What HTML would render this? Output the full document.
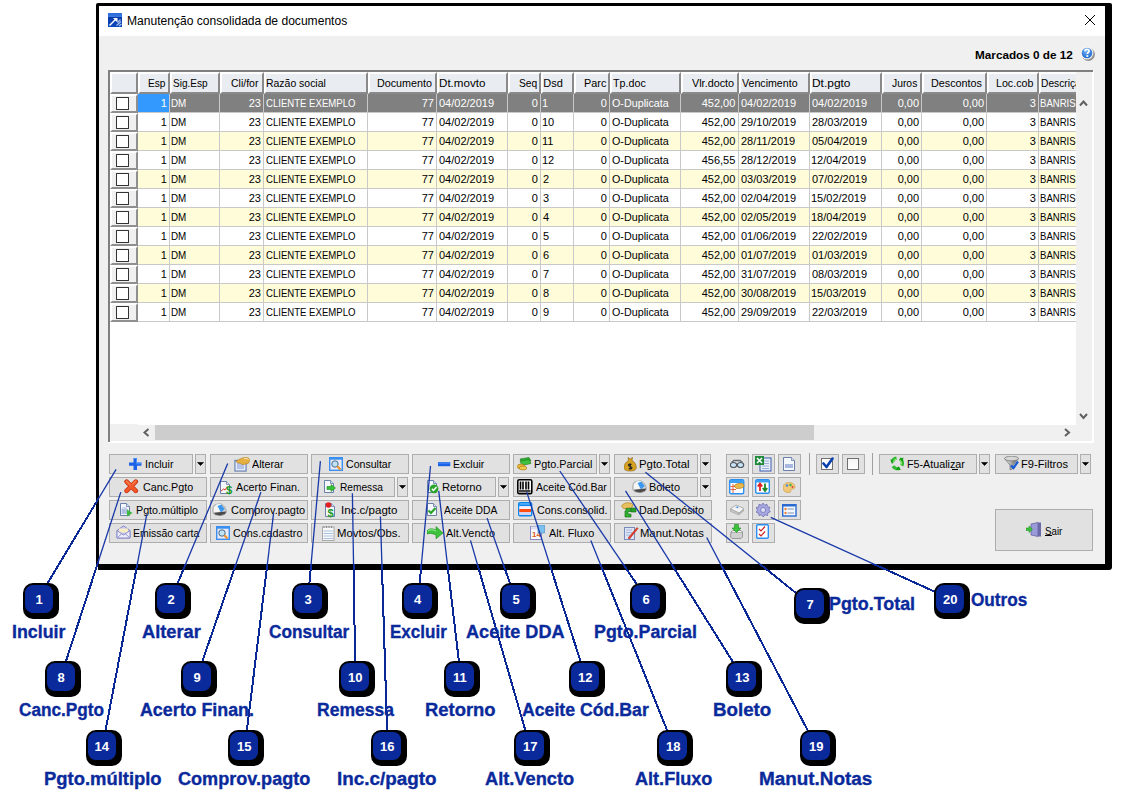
<!DOCTYPE html><html><head><meta charset="utf-8"><style>
html,body{margin:0;padding:0;}
body{width:1129px;height:807px;position:relative;overflow:hidden;background:#fff;font-family:'Liberation Sans',sans-serif;}
div,span,svg{position:absolute;}
.t{white-space:pre;line-height:normal;transform-origin:0 0;}
</style></head><body>
<div style="left:96px;top:3px;width:1016px;height:567px;background:#000;border-radius:2px 2px 3px 3px;"></div>
<div style="left:99px;top:6px;width:1006px;height:30px;background:#fff;"></div>
<div style="left:99px;top:36px;width:1006px;height:528px;background:#f0f0f0;"></div>
<div style="left:96px;top:564px;width:2px;height:6px;background:#fff;"></div>
<span class="t" style="left:127.49px;top:14px;font:12px 'Liberation Sans';color:#000;transform:scaleX(1.0064);">Manutenção consolidada de documentos</span>
<svg style="left:1083px;top:13px" width="14" height="14" viewBox="0 0 14 14"><path d="M2 2L12 12M12 2L2 12" stroke="#000" stroke-width="1"/></svg>
<span class="t" style="left:974.60px;top:49px;font:bold 11px 'Liberation Sans';color:#000;transform:scaleX(1.0674);">Marcados 0 de 12</span>
<svg style="left:1080px;top:46px" width="16" height="16" viewBox="0 0 16 16"><defs><radialGradient id="hg" cx="0.45" cy="0.3" r="0.7"><stop offset="0" stop-color="#7ab8f4"/><stop offset="1" stop-color="#1a66d0"/></radialGradient></defs><circle cx="8.3" cy="8.3" r="6.6" fill="#707070" opacity="0.75"/><circle cx="7" cy="7" r="6.4" fill="#f8f4f0"/><circle cx="7" cy="7" r="5.3" fill="url(#hg)"/><path d="M4.9 5.2C4.9 3.9 5.9 3.3 7 3.3C8.2 3.3 9.1 3.9 9.1 5C9.1 6.3 7.3 6.4 7.3 8" stroke="#fff" stroke-width="1.7" fill="none"/><rect x="6.3" y="9.2" width="2" height="1.7" fill="#fff"/></svg>
<svg style="left:108px;top:13px" width="15" height="15" viewBox="0 0 15 15"><defs><linearGradient id="tg" x1="0" y1="0" x2="0" y2="1"><stop offset="0" stop-color="#2a6ad8"/><stop offset="0.3" stop-color="#3a7ae0"/><stop offset="0.32" stop-color="#0a3aa8"/><stop offset="1" stop-color="#0a48c0"/></linearGradient></defs><rect x="0" y="0" width="14" height="14" fill="url(#tg)"/><path d="M1.5 12.5L7.5 6.5" stroke="#fff" stroke-width="1.5"/><path d="M5 5H9.5V9.5Z" fill="#fff"/><path d="M9.5 9.5L12.5 6.5M8.5 12.5L13 8.5M11 13L13.5 11" stroke="#a8c0ec" stroke-width="1.2"/></svg>
<div style="left:108px;top:70px;width:986px;height:373px;background:#fff;"></div>
<div style="left:108px;top:70px;width:985px;height:2px;background:#7f7f7f;"></div>
<div style="left:108px;top:70px;width:2px;height:372px;background:#7f7f7f;"></div>
<div style="left:110px;top:72px;width:28px;height:22px;background:#e9ecf0;box-sizing:border-box;border-left:2px solid #fff;border-top:2px solid #fff;border-right:2px solid #8a8a8a;border-bottom:2px solid #8a8a8a;"></div>
<div style="left:138px;top:72px;width:32px;height:22px;background:#e9ecf0;box-sizing:border-box;border-left:2px solid #fff;border-top:2px solid #fff;border-right:2px solid #8a8a8a;border-bottom:2px solid #8a8a8a;"></div>
<div style="left:170px;top:72px;width:50px;height:22px;background:#e9ecf0;box-sizing:border-box;border-left:2px solid #fff;border-top:2px solid #fff;border-right:2px solid #8a8a8a;border-bottom:2px solid #8a8a8a;"></div>
<div style="left:220px;top:72px;width:44px;height:22px;background:#e9ecf0;box-sizing:border-box;border-left:2px solid #fff;border-top:2px solid #fff;border-right:2px solid #8a8a8a;border-bottom:2px solid #8a8a8a;"></div>
<div style="left:264px;top:72px;width:104px;height:22px;background:#e9ecf0;box-sizing:border-box;border-left:2px solid #fff;border-top:2px solid #fff;border-right:2px solid #8a8a8a;border-bottom:2px solid #8a8a8a;"></div>
<div style="left:368px;top:72px;width:69px;height:22px;background:#e9ecf0;box-sizing:border-box;border-left:2px solid #fff;border-top:2px solid #fff;border-right:2px solid #8a8a8a;border-bottom:2px solid #8a8a8a;"></div>
<div style="left:437px;top:72px;width:71px;height:22px;background:#e9ecf0;box-sizing:border-box;border-left:2px solid #fff;border-top:2px solid #fff;border-right:2px solid #8a8a8a;border-bottom:2px solid #8a8a8a;"></div>
<div style="left:508px;top:72px;width:33px;height:22px;background:#e9ecf0;box-sizing:border-box;border-left:2px solid #fff;border-top:2px solid #fff;border-right:2px solid #8a8a8a;border-bottom:2px solid #8a8a8a;"></div>
<div style="left:541px;top:72px;width:33px;height:22px;background:#e9ecf0;box-sizing:border-box;border-left:2px solid #fff;border-top:2px solid #fff;border-right:2px solid #8a8a8a;border-bottom:2px solid #8a8a8a;"></div>
<div style="left:574px;top:72px;width:36px;height:22px;background:#e9ecf0;box-sizing:border-box;border-left:2px solid #fff;border-top:2px solid #fff;border-right:2px solid #8a8a8a;border-bottom:2px solid #8a8a8a;"></div>
<div style="left:610px;top:72px;width:71px;height:22px;background:#e9ecf0;box-sizing:border-box;border-left:2px solid #fff;border-top:2px solid #fff;border-right:2px solid #8a8a8a;border-bottom:2px solid #8a8a8a;"></div>
<div style="left:681px;top:72px;width:58px;height:22px;background:#e9ecf0;box-sizing:border-box;border-left:2px solid #fff;border-top:2px solid #fff;border-right:2px solid #8a8a8a;border-bottom:2px solid #8a8a8a;"></div>
<div style="left:739px;top:72px;width:71px;height:22px;background:#e9ecf0;box-sizing:border-box;border-left:2px solid #fff;border-top:2px solid #fff;border-right:2px solid #8a8a8a;border-bottom:2px solid #8a8a8a;"></div>
<div style="left:810px;top:72px;width:72px;height:22px;background:#e9ecf0;box-sizing:border-box;border-left:2px solid #fff;border-top:2px solid #fff;border-right:2px solid #8a8a8a;border-bottom:2px solid #8a8a8a;"></div>
<div style="left:882px;top:72px;width:40px;height:22px;background:#e9ecf0;box-sizing:border-box;border-left:2px solid #fff;border-top:2px solid #fff;border-right:2px solid #8a8a8a;border-bottom:2px solid #8a8a8a;"></div>
<div style="left:922px;top:72px;width:65px;height:22px;background:#e9ecf0;box-sizing:border-box;border-left:2px solid #fff;border-top:2px solid #fff;border-right:2px solid #8a8a8a;border-bottom:2px solid #8a8a8a;"></div>
<div style="left:987px;top:72px;width:52px;height:22px;background:#e9ecf0;box-sizing:border-box;border-left:2px solid #fff;border-top:2px solid #fff;border-right:2px solid #8a8a8a;border-bottom:2px solid #8a8a8a;"></div>
<div style="left:1039px;top:72px;width:37px;height:22px;background:#e9ecf0;box-sizing:border-box;border-left:2px solid #fff;border-top:2px solid #fff;border-bottom:2px solid #8a8a8a;"></div>
<div style="left:138px;top:94px;width:938px;height:19px;background:#808080;"></div>
<div style="left:110px;top:94px;width:28px;height:19px;background:#f0f0f0;box-sizing:border-box;border-left:2px solid #fff;border-top:2px solid #fff;border-right:2px solid #8f8f8f;border-bottom:2px solid #8f8f8f;"></div>
<div style="left:116px;top:97px;width:13px;height:13px;background:#fff;box-sizing:border-box;border:1px solid #333;border-radius:0.5px;"></div>
<div style="left:138px;top:94px;width:31px;height:18px;background:#3399ff;"></div>
<div style="left:138px;top:112px;width:938px;height:1px;background:#c9c9c9;"></div>
<div style="left:138px;top:113px;width:938px;height:19px;background:#ffffff;"></div>
<div style="left:110px;top:113px;width:28px;height:19px;background:#f0f0f0;box-sizing:border-box;border-left:2px solid #fff;border-top:2px solid #fff;border-right:2px solid #8f8f8f;border-bottom:2px solid #8f8f8f;"></div>
<div style="left:116px;top:116px;width:13px;height:13px;background:#fff;box-sizing:border-box;border:1px solid #333;border-radius:0.5px;"></div>
<div style="left:138px;top:131px;width:938px;height:1px;background:#c9c9c9;"></div>
<div style="left:138px;top:132px;width:938px;height:19px;background:#fffcd9;"></div>
<div style="left:110px;top:132px;width:28px;height:19px;background:#f0f0f0;box-sizing:border-box;border-left:2px solid #fff;border-top:2px solid #fff;border-right:2px solid #8f8f8f;border-bottom:2px solid #8f8f8f;"></div>
<div style="left:116px;top:135px;width:13px;height:13px;background:#fff;box-sizing:border-box;border:1px solid #333;border-radius:0.5px;"></div>
<div style="left:138px;top:150px;width:938px;height:1px;background:#c9c9c9;"></div>
<div style="left:138px;top:151px;width:938px;height:19px;background:#ffffff;"></div>
<div style="left:110px;top:151px;width:28px;height:19px;background:#f0f0f0;box-sizing:border-box;border-left:2px solid #fff;border-top:2px solid #fff;border-right:2px solid #8f8f8f;border-bottom:2px solid #8f8f8f;"></div>
<div style="left:116px;top:154px;width:13px;height:13px;background:#fff;box-sizing:border-box;border:1px solid #333;border-radius:0.5px;"></div>
<div style="left:138px;top:169px;width:938px;height:1px;background:#c9c9c9;"></div>
<div style="left:138px;top:170px;width:938px;height:19px;background:#fffcd9;"></div>
<div style="left:110px;top:170px;width:28px;height:19px;background:#f0f0f0;box-sizing:border-box;border-left:2px solid #fff;border-top:2px solid #fff;border-right:2px solid #8f8f8f;border-bottom:2px solid #8f8f8f;"></div>
<div style="left:116px;top:173px;width:13px;height:13px;background:#fff;box-sizing:border-box;border:1px solid #333;border-radius:0.5px;"></div>
<div style="left:138px;top:188px;width:938px;height:1px;background:#c9c9c9;"></div>
<div style="left:138px;top:189px;width:938px;height:19px;background:#ffffff;"></div>
<div style="left:110px;top:189px;width:28px;height:19px;background:#f0f0f0;box-sizing:border-box;border-left:2px solid #fff;border-top:2px solid #fff;border-right:2px solid #8f8f8f;border-bottom:2px solid #8f8f8f;"></div>
<div style="left:116px;top:192px;width:13px;height:13px;background:#fff;box-sizing:border-box;border:1px solid #333;border-radius:0.5px;"></div>
<div style="left:138px;top:207px;width:938px;height:1px;background:#c9c9c9;"></div>
<div style="left:138px;top:208px;width:938px;height:19px;background:#fffcd9;"></div>
<div style="left:110px;top:208px;width:28px;height:19px;background:#f0f0f0;box-sizing:border-box;border-left:2px solid #fff;border-top:2px solid #fff;border-right:2px solid #8f8f8f;border-bottom:2px solid #8f8f8f;"></div>
<div style="left:116px;top:211px;width:13px;height:13px;background:#fff;box-sizing:border-box;border:1px solid #333;border-radius:0.5px;"></div>
<div style="left:138px;top:226px;width:938px;height:1px;background:#c9c9c9;"></div>
<div style="left:138px;top:227px;width:938px;height:19px;background:#ffffff;"></div>
<div style="left:110px;top:227px;width:28px;height:19px;background:#f0f0f0;box-sizing:border-box;border-left:2px solid #fff;border-top:2px solid #fff;border-right:2px solid #8f8f8f;border-bottom:2px solid #8f8f8f;"></div>
<div style="left:116px;top:230px;width:13px;height:13px;background:#fff;box-sizing:border-box;border:1px solid #333;border-radius:0.5px;"></div>
<div style="left:138px;top:245px;width:938px;height:1px;background:#c9c9c9;"></div>
<div style="left:138px;top:246px;width:938px;height:19px;background:#fffcd9;"></div>
<div style="left:110px;top:246px;width:28px;height:19px;background:#f0f0f0;box-sizing:border-box;border-left:2px solid #fff;border-top:2px solid #fff;border-right:2px solid #8f8f8f;border-bottom:2px solid #8f8f8f;"></div>
<div style="left:116px;top:249px;width:13px;height:13px;background:#fff;box-sizing:border-box;border:1px solid #333;border-radius:0.5px;"></div>
<div style="left:138px;top:264px;width:938px;height:1px;background:#c9c9c9;"></div>
<div style="left:138px;top:265px;width:938px;height:19px;background:#ffffff;"></div>
<div style="left:110px;top:265px;width:28px;height:19px;background:#f0f0f0;box-sizing:border-box;border-left:2px solid #fff;border-top:2px solid #fff;border-right:2px solid #8f8f8f;border-bottom:2px solid #8f8f8f;"></div>
<div style="left:116px;top:268px;width:13px;height:13px;background:#fff;box-sizing:border-box;border:1px solid #333;border-radius:0.5px;"></div>
<div style="left:138px;top:283px;width:938px;height:1px;background:#c9c9c9;"></div>
<div style="left:138px;top:284px;width:938px;height:19px;background:#fffcd9;"></div>
<div style="left:110px;top:284px;width:28px;height:19px;background:#f0f0f0;box-sizing:border-box;border-left:2px solid #fff;border-top:2px solid #fff;border-right:2px solid #8f8f8f;border-bottom:2px solid #8f8f8f;"></div>
<div style="left:116px;top:287px;width:13px;height:13px;background:#fff;box-sizing:border-box;border:1px solid #333;border-radius:0.5px;"></div>
<div style="left:138px;top:302px;width:938px;height:1px;background:#c9c9c9;"></div>
<div style="left:138px;top:303px;width:938px;height:19px;background:#ffffff;"></div>
<div style="left:110px;top:303px;width:28px;height:19px;background:#f0f0f0;box-sizing:border-box;border-left:2px solid #fff;border-top:2px solid #fff;border-right:2px solid #8f8f8f;border-bottom:2px solid #8f8f8f;"></div>
<div style="left:116px;top:306px;width:13px;height:13px;background:#fff;box-sizing:border-box;border:1px solid #333;border-radius:0.5px;"></div>
<div style="left:138px;top:321px;width:938px;height:1px;background:#c9c9c9;"></div>
<div style="left:169px;top:94px;width:1px;height:228px;background:#c9c9c9;"></div>
<div style="left:219px;top:94px;width:1px;height:228px;background:#c9c9c9;"></div>
<div style="left:263px;top:94px;width:1px;height:228px;background:#c9c9c9;"></div>
<div style="left:367px;top:94px;width:1px;height:228px;background:#c9c9c9;"></div>
<div style="left:436px;top:94px;width:1px;height:228px;background:#c9c9c9;"></div>
<div style="left:507px;top:94px;width:1px;height:228px;background:#c9c9c9;"></div>
<div style="left:540px;top:94px;width:1px;height:228px;background:#c9c9c9;"></div>
<div style="left:573px;top:94px;width:1px;height:228px;background:#c9c9c9;"></div>
<div style="left:609px;top:94px;width:1px;height:228px;background:#c9c9c9;"></div>
<div style="left:680px;top:94px;width:1px;height:228px;background:#c9c9c9;"></div>
<div style="left:738px;top:94px;width:1px;height:228px;background:#c9c9c9;"></div>
<div style="left:809px;top:94px;width:1px;height:228px;background:#c9c9c9;"></div>
<div style="left:881px;top:94px;width:1px;height:228px;background:#c9c9c9;"></div>
<div style="left:921px;top:94px;width:1px;height:228px;background:#c9c9c9;"></div>
<div style="left:986px;top:94px;width:1px;height:228px;background:#c9c9c9;"></div>
<div style="left:1038px;top:94px;width:1px;height:228px;background:#c9c9c9;"></div>
<div style="left:110px;top:424px;width:28px;height:17px;background:#f0f0f0;"></div>
<div style="left:137px;top:425px;width:955px;height:16px;background:#f0f0f0;"></div>
<div style="left:155px;top:425px;width:659px;height:15px;background:#cdcdcd;"></div>
<svg style="left:142px;top:428px" width="9" height="9" viewBox="0 0 9 9"><path d="M6.5 1L2.5 4.5L6.5 8" fill="none" stroke="#606060" stroke-width="2"/></svg>
<svg style="left:1063px;top:428px" width="9" height="9" viewBox="0 0 9 9"><path d="M2 1L6 4.5L2 8" fill="none" stroke="#606060" stroke-width="2"/></svg>
<span class="t" style="left:147.68px;top:77px;font:11px 'Liberation Sans';color:#000;transform:scaleX(0.9222);">Esp</span>
<span class="t" style="left:173.40px;top:77px;font:11px 'Liberation Sans';color:#000;transform:scaleX(0.9158);">Sig.Esp</span>
<span class="t" style="left:230.80px;top:77px;font:11px 'Liberation Sans';color:#000;transform:scaleX(0.9552);">Cli/for</span>
<span class="t" style="left:266.45px;top:77px;font:11px 'Liberation Sans';color:#000;transform:scaleX(0.9500);">Razão social</span>
<span class="t" style="left:377.42px;top:77px;font:11px 'Liberation Sans';color:#000;transform:scaleX(0.9764);">Documento</span>
<span class="t" style="left:439.04px;top:77px;font:11px 'Liberation Sans';color:#000;transform:scaleX(1.0558);">Dt.movto</span>
<span class="t" style="left:518.50px;top:77px;font:11px 'Liberation Sans';color:#000;transform:scaleX(0.9316);">Seq</span>
<span class="t" style="left:543.20px;top:77px;font:11px 'Liberation Sans';color:#000;">Dsd</span>
<span class="t" style="left:583.51px;top:77px;font:11px 'Liberation Sans';color:#000;transform:scaleX(0.9905);">Parc</span>
<span class="t" style="left:613.40px;top:77px;font:11px 'Liberation Sans';color:#000;transform:scaleX(0.9735);">Tp.doc</span>
<span class="t" style="left:691.70px;top:77px;font:11px 'Liberation Sans';color:#000;transform:scaleX(0.9837);">Vlr.docto</span>
<span class="t" style="left:742.30px;top:77px;font:11px 'Liberation Sans';color:#000;transform:scaleX(0.9667);">Vencimento</span>
<span class="t" style="left:811.91px;top:77px;font:11px 'Liberation Sans';color:#000;transform:scaleX(1.0853);">Dt.pgto</span>
<span class="t" style="left:891.80px;top:77px;font:11px 'Liberation Sans';color:#000;transform:scaleX(0.9407);">Juros</span>
<span class="t" style="left:931.12px;top:77px;font:11px 'Liberation Sans';color:#000;transform:scaleX(0.9804);">Descontos</span>
<span class="t" style="left:996.33px;top:77px;font:11px 'Liberation Sans';color:#000;transform:scaleX(0.9684);">Loc.cob</span>
<span class="t" style="left:1041.27px;top:77px;font:11px 'Liberation Sans';color:#000;transform:scaleX(0.9300);clip-path:inset(0 0 0 0);">Descrição</span>
<span class="t" style="left:160.70px;top:97px;font:11px 'Liberation Sans';color:#fff;">1</span>
<span class="t" style="left:171.11px;top:97px;font:11px 'Liberation Sans';color:#fff;transform:scaleX(0.8938);">DM</span>
<span class="t" style="left:248.70px;top:97px;font:11px 'Liberation Sans';color:#fff;">23</span>
<span class="t" style="left:266.00px;top:97px;font:11px 'Liberation Sans';color:#fff;transform:scaleX(0.8706);">CLIENTE EXEMPLO</span>
<span class="t" style="left:421.70px;top:97px;font:11px 'Liberation Sans';color:#fff;">77</span>
<span class="t" style="left:439.00px;top:97px;font:11px 'Liberation Sans';color:#fff;">04/02/2019</span>
<span class="t" style="left:531.70px;top:97px;font:11px 'Liberation Sans';color:#fff;">0</span>
<span class="t" style="left:542.00px;top:97px;font:11px 'Liberation Sans';color:#fff;">1</span>
<span class="t" style="left:600.70px;top:97px;font:11px 'Liberation Sans';color:#fff;">0</span>
<span class="t" style="left:612.00px;top:97px;font:11px 'Liberation Sans';color:#fff;transform:scaleX(0.9772);">O-Duplicata</span>
<span class="t" style="left:701.70px;top:97px;font:11px 'Liberation Sans';color:#fff;">452,00</span>
<span class="t" style="left:741.00px;top:97px;font:11px 'Liberation Sans';color:#fff;">04/02/2019</span>
<span class="t" style="left:812.00px;top:97px;font:11px 'Liberation Sans';color:#fff;">04/02/2019</span>
<span class="t" style="left:897.70px;top:97px;font:11px 'Liberation Sans';color:#fff;">0,00</span>
<span class="t" style="left:962.70px;top:97px;font:11px 'Liberation Sans';color:#fff;">0,00</span>
<span class="t" style="left:1029.70px;top:97px;font:11px 'Liberation Sans';color:#fff;">3</span>
<span class="t" style="left:1040.13px;top:97px;font:11px 'Liberation Sans';color:#fff;transform:scaleX(0.8700);">BANRISUL</span>
<span class="t" style="left:160.70px;top:116px;font:11px 'Liberation Sans';color:#000;">1</span>
<span class="t" style="left:171.11px;top:116px;font:11px 'Liberation Sans';color:#000;transform:scaleX(0.8938);">DM</span>
<span class="t" style="left:248.70px;top:116px;font:11px 'Liberation Sans';color:#000;">23</span>
<span class="t" style="left:266.00px;top:116px;font:11px 'Liberation Sans';color:#000;transform:scaleX(0.8706);">CLIENTE EXEMPLO</span>
<span class="t" style="left:421.70px;top:116px;font:11px 'Liberation Sans';color:#000;">77</span>
<span class="t" style="left:439.00px;top:116px;font:11px 'Liberation Sans';color:#000;">04/02/2019</span>
<span class="t" style="left:531.70px;top:116px;font:11px 'Liberation Sans';color:#000;">0</span>
<span class="t" style="left:542.00px;top:116px;font:11px 'Liberation Sans';color:#000;">10</span>
<span class="t" style="left:600.70px;top:116px;font:11px 'Liberation Sans';color:#000;">0</span>
<span class="t" style="left:612.00px;top:116px;font:11px 'Liberation Sans';color:#000;transform:scaleX(0.9772);">O-Duplicata</span>
<span class="t" style="left:701.70px;top:116px;font:11px 'Liberation Sans';color:#000;">452,00</span>
<span class="t" style="left:741.00px;top:116px;font:11px 'Liberation Sans';color:#000;">29/10/2019</span>
<span class="t" style="left:812.00px;top:116px;font:11px 'Liberation Sans';color:#000;">28/03/2019</span>
<span class="t" style="left:897.70px;top:116px;font:11px 'Liberation Sans';color:#000;">0,00</span>
<span class="t" style="left:962.70px;top:116px;font:11px 'Liberation Sans';color:#000;">0,00</span>
<span class="t" style="left:1029.70px;top:116px;font:11px 'Liberation Sans';color:#000;">3</span>
<span class="t" style="left:1040.13px;top:116px;font:11px 'Liberation Sans';color:#000;transform:scaleX(0.8700);">BANRISUL</span>
<span class="t" style="left:160.70px;top:135px;font:11px 'Liberation Sans';color:#000;">1</span>
<span class="t" style="left:171.11px;top:135px;font:11px 'Liberation Sans';color:#000;transform:scaleX(0.8938);">DM</span>
<span class="t" style="left:248.70px;top:135px;font:11px 'Liberation Sans';color:#000;">23</span>
<span class="t" style="left:266.00px;top:135px;font:11px 'Liberation Sans';color:#000;transform:scaleX(0.8706);">CLIENTE EXEMPLO</span>
<span class="t" style="left:421.70px;top:135px;font:11px 'Liberation Sans';color:#000;">77</span>
<span class="t" style="left:439.00px;top:135px;font:11px 'Liberation Sans';color:#000;">04/02/2019</span>
<span class="t" style="left:531.70px;top:135px;font:11px 'Liberation Sans';color:#000;">0</span>
<span class="t" style="left:542.00px;top:135px;font:11px 'Liberation Sans';color:#000;">11</span>
<span class="t" style="left:600.70px;top:135px;font:11px 'Liberation Sans';color:#000;">0</span>
<span class="t" style="left:612.00px;top:135px;font:11px 'Liberation Sans';color:#000;transform:scaleX(0.9772);">O-Duplicata</span>
<span class="t" style="left:701.70px;top:135px;font:11px 'Liberation Sans';color:#000;">452,00</span>
<span class="t" style="left:741.00px;top:135px;font:11px 'Liberation Sans';color:#000;">28/11/2019</span>
<span class="t" style="left:812.00px;top:135px;font:11px 'Liberation Sans';color:#000;">05/04/2019</span>
<span class="t" style="left:897.70px;top:135px;font:11px 'Liberation Sans';color:#000;">0,00</span>
<span class="t" style="left:962.70px;top:135px;font:11px 'Liberation Sans';color:#000;">0,00</span>
<span class="t" style="left:1029.70px;top:135px;font:11px 'Liberation Sans';color:#000;">3</span>
<span class="t" style="left:1040.13px;top:135px;font:11px 'Liberation Sans';color:#000;transform:scaleX(0.8700);">BANRISUL</span>
<span class="t" style="left:160.70px;top:154px;font:11px 'Liberation Sans';color:#000;">1</span>
<span class="t" style="left:171.11px;top:154px;font:11px 'Liberation Sans';color:#000;transform:scaleX(0.8938);">DM</span>
<span class="t" style="left:248.70px;top:154px;font:11px 'Liberation Sans';color:#000;">23</span>
<span class="t" style="left:266.00px;top:154px;font:11px 'Liberation Sans';color:#000;transform:scaleX(0.8706);">CLIENTE EXEMPLO</span>
<span class="t" style="left:421.70px;top:154px;font:11px 'Liberation Sans';color:#000;">77</span>
<span class="t" style="left:439.00px;top:154px;font:11px 'Liberation Sans';color:#000;">04/02/2019</span>
<span class="t" style="left:531.70px;top:154px;font:11px 'Liberation Sans';color:#000;">0</span>
<span class="t" style="left:542.00px;top:154px;font:11px 'Liberation Sans';color:#000;">12</span>
<span class="t" style="left:600.70px;top:154px;font:11px 'Liberation Sans';color:#000;">0</span>
<span class="t" style="left:612.00px;top:154px;font:11px 'Liberation Sans';color:#000;transform:scaleX(0.9772);">O-Duplicata</span>
<span class="t" style="left:701.70px;top:154px;font:11px 'Liberation Sans';color:#000;">456,55</span>
<span class="t" style="left:741.00px;top:154px;font:11px 'Liberation Sans';color:#000;">28/12/2019</span>
<span class="t" style="left:811.00px;top:154px;font:11px 'Liberation Sans';color:#000;">12/04/2019</span>
<span class="t" style="left:897.70px;top:154px;font:11px 'Liberation Sans';color:#000;">0,00</span>
<span class="t" style="left:962.70px;top:154px;font:11px 'Liberation Sans';color:#000;">0,00</span>
<span class="t" style="left:1029.70px;top:154px;font:11px 'Liberation Sans';color:#000;">3</span>
<span class="t" style="left:1040.13px;top:154px;font:11px 'Liberation Sans';color:#000;transform:scaleX(0.8700);">BANRISUL</span>
<span class="t" style="left:160.70px;top:173px;font:11px 'Liberation Sans';color:#000;">1</span>
<span class="t" style="left:171.11px;top:173px;font:11px 'Liberation Sans';color:#000;transform:scaleX(0.8938);">DM</span>
<span class="t" style="left:248.70px;top:173px;font:11px 'Liberation Sans';color:#000;">23</span>
<span class="t" style="left:266.00px;top:173px;font:11px 'Liberation Sans';color:#000;transform:scaleX(0.8706);">CLIENTE EXEMPLO</span>
<span class="t" style="left:421.70px;top:173px;font:11px 'Liberation Sans';color:#000;">77</span>
<span class="t" style="left:439.00px;top:173px;font:11px 'Liberation Sans';color:#000;">04/02/2019</span>
<span class="t" style="left:531.70px;top:173px;font:11px 'Liberation Sans';color:#000;">0</span>
<span class="t" style="left:543.00px;top:173px;font:11px 'Liberation Sans';color:#000;">2</span>
<span class="t" style="left:600.70px;top:173px;font:11px 'Liberation Sans';color:#000;">0</span>
<span class="t" style="left:612.00px;top:173px;font:11px 'Liberation Sans';color:#000;transform:scaleX(0.9772);">O-Duplicata</span>
<span class="t" style="left:701.70px;top:173px;font:11px 'Liberation Sans';color:#000;">452,00</span>
<span class="t" style="left:741.00px;top:173px;font:11px 'Liberation Sans';color:#000;">03/03/2019</span>
<span class="t" style="left:812.00px;top:173px;font:11px 'Liberation Sans';color:#000;">07/02/2019</span>
<span class="t" style="left:897.70px;top:173px;font:11px 'Liberation Sans';color:#000;">0,00</span>
<span class="t" style="left:962.70px;top:173px;font:11px 'Liberation Sans';color:#000;">0,00</span>
<span class="t" style="left:1029.70px;top:173px;font:11px 'Liberation Sans';color:#000;">3</span>
<span class="t" style="left:1040.13px;top:173px;font:11px 'Liberation Sans';color:#000;transform:scaleX(0.8700);">BANRISUL</span>
<span class="t" style="left:160.70px;top:192px;font:11px 'Liberation Sans';color:#000;">1</span>
<span class="t" style="left:171.11px;top:192px;font:11px 'Liberation Sans';color:#000;transform:scaleX(0.8938);">DM</span>
<span class="t" style="left:248.70px;top:192px;font:11px 'Liberation Sans';color:#000;">23</span>
<span class="t" style="left:266.00px;top:192px;font:11px 'Liberation Sans';color:#000;transform:scaleX(0.8706);">CLIENTE EXEMPLO</span>
<span class="t" style="left:421.70px;top:192px;font:11px 'Liberation Sans';color:#000;">77</span>
<span class="t" style="left:439.00px;top:192px;font:11px 'Liberation Sans';color:#000;">04/02/2019</span>
<span class="t" style="left:531.70px;top:192px;font:11px 'Liberation Sans';color:#000;">0</span>
<span class="t" style="left:543.00px;top:192px;font:11px 'Liberation Sans';color:#000;">3</span>
<span class="t" style="left:600.70px;top:192px;font:11px 'Liberation Sans';color:#000;">0</span>
<span class="t" style="left:612.00px;top:192px;font:11px 'Liberation Sans';color:#000;transform:scaleX(0.9772);">O-Duplicata</span>
<span class="t" style="left:701.70px;top:192px;font:11px 'Liberation Sans';color:#000;">452,00</span>
<span class="t" style="left:741.00px;top:192px;font:11px 'Liberation Sans';color:#000;">02/04/2019</span>
<span class="t" style="left:811.00px;top:192px;font:11px 'Liberation Sans';color:#000;">15/02/2019</span>
<span class="t" style="left:897.70px;top:192px;font:11px 'Liberation Sans';color:#000;">0,00</span>
<span class="t" style="left:962.70px;top:192px;font:11px 'Liberation Sans';color:#000;">0,00</span>
<span class="t" style="left:1029.70px;top:192px;font:11px 'Liberation Sans';color:#000;">3</span>
<span class="t" style="left:1040.13px;top:192px;font:11px 'Liberation Sans';color:#000;transform:scaleX(0.8700);">BANRISUL</span>
<span class="t" style="left:160.70px;top:211px;font:11px 'Liberation Sans';color:#000;">1</span>
<span class="t" style="left:171.11px;top:211px;font:11px 'Liberation Sans';color:#000;transform:scaleX(0.8938);">DM</span>
<span class="t" style="left:248.70px;top:211px;font:11px 'Liberation Sans';color:#000;">23</span>
<span class="t" style="left:266.00px;top:211px;font:11px 'Liberation Sans';color:#000;transform:scaleX(0.8706);">CLIENTE EXEMPLO</span>
<span class="t" style="left:421.70px;top:211px;font:11px 'Liberation Sans';color:#000;">77</span>
<span class="t" style="left:439.00px;top:211px;font:11px 'Liberation Sans';color:#000;">04/02/2019</span>
<span class="t" style="left:531.70px;top:211px;font:11px 'Liberation Sans';color:#000;">0</span>
<span class="t" style="left:543.00px;top:211px;font:11px 'Liberation Sans';color:#000;">4</span>
<span class="t" style="left:600.70px;top:211px;font:11px 'Liberation Sans';color:#000;">0</span>
<span class="t" style="left:612.00px;top:211px;font:11px 'Liberation Sans';color:#000;transform:scaleX(0.9772);">O-Duplicata</span>
<span class="t" style="left:701.70px;top:211px;font:11px 'Liberation Sans';color:#000;">452,00</span>
<span class="t" style="left:741.00px;top:211px;font:11px 'Liberation Sans';color:#000;">02/05/2019</span>
<span class="t" style="left:811.00px;top:211px;font:11px 'Liberation Sans';color:#000;">18/04/2019</span>
<span class="t" style="left:897.70px;top:211px;font:11px 'Liberation Sans';color:#000;">0,00</span>
<span class="t" style="left:962.70px;top:211px;font:11px 'Liberation Sans';color:#000;">0,00</span>
<span class="t" style="left:1029.70px;top:211px;font:11px 'Liberation Sans';color:#000;">3</span>
<span class="t" style="left:1040.13px;top:211px;font:11px 'Liberation Sans';color:#000;transform:scaleX(0.8700);">BANRISUL</span>
<span class="t" style="left:160.70px;top:230px;font:11px 'Liberation Sans';color:#000;">1</span>
<span class="t" style="left:171.11px;top:230px;font:11px 'Liberation Sans';color:#000;transform:scaleX(0.8938);">DM</span>
<span class="t" style="left:248.70px;top:230px;font:11px 'Liberation Sans';color:#000;">23</span>
<span class="t" style="left:266.00px;top:230px;font:11px 'Liberation Sans';color:#000;transform:scaleX(0.8706);">CLIENTE EXEMPLO</span>
<span class="t" style="left:421.70px;top:230px;font:11px 'Liberation Sans';color:#000;">77</span>
<span class="t" style="left:439.00px;top:230px;font:11px 'Liberation Sans';color:#000;">04/02/2019</span>
<span class="t" style="left:531.70px;top:230px;font:11px 'Liberation Sans';color:#000;">0</span>
<span class="t" style="left:543.00px;top:230px;font:11px 'Liberation Sans';color:#000;">5</span>
<span class="t" style="left:600.70px;top:230px;font:11px 'Liberation Sans';color:#000;">0</span>
<span class="t" style="left:612.00px;top:230px;font:11px 'Liberation Sans';color:#000;transform:scaleX(0.9772);">O-Duplicata</span>
<span class="t" style="left:701.70px;top:230px;font:11px 'Liberation Sans';color:#000;">452,00</span>
<span class="t" style="left:741.00px;top:230px;font:11px 'Liberation Sans';color:#000;">01/06/2019</span>
<span class="t" style="left:812.00px;top:230px;font:11px 'Liberation Sans';color:#000;">22/02/2019</span>
<span class="t" style="left:897.70px;top:230px;font:11px 'Liberation Sans';color:#000;">0,00</span>
<span class="t" style="left:962.70px;top:230px;font:11px 'Liberation Sans';color:#000;">0,00</span>
<span class="t" style="left:1029.70px;top:230px;font:11px 'Liberation Sans';color:#000;">3</span>
<span class="t" style="left:1040.13px;top:230px;font:11px 'Liberation Sans';color:#000;transform:scaleX(0.8700);">BANRISUL</span>
<span class="t" style="left:160.70px;top:249px;font:11px 'Liberation Sans';color:#000;">1</span>
<span class="t" style="left:171.11px;top:249px;font:11px 'Liberation Sans';color:#000;transform:scaleX(0.8938);">DM</span>
<span class="t" style="left:248.70px;top:249px;font:11px 'Liberation Sans';color:#000;">23</span>
<span class="t" style="left:266.00px;top:249px;font:11px 'Liberation Sans';color:#000;transform:scaleX(0.8706);">CLIENTE EXEMPLO</span>
<span class="t" style="left:421.70px;top:249px;font:11px 'Liberation Sans';color:#000;">77</span>
<span class="t" style="left:439.00px;top:249px;font:11px 'Liberation Sans';color:#000;">04/02/2019</span>
<span class="t" style="left:531.70px;top:249px;font:11px 'Liberation Sans';color:#000;">0</span>
<span class="t" style="left:543.00px;top:249px;font:11px 'Liberation Sans';color:#000;">6</span>
<span class="t" style="left:600.70px;top:249px;font:11px 'Liberation Sans';color:#000;">0</span>
<span class="t" style="left:612.00px;top:249px;font:11px 'Liberation Sans';color:#000;transform:scaleX(0.9772);">O-Duplicata</span>
<span class="t" style="left:701.70px;top:249px;font:11px 'Liberation Sans';color:#000;">452,00</span>
<span class="t" style="left:741.00px;top:249px;font:11px 'Liberation Sans';color:#000;">01/07/2019</span>
<span class="t" style="left:812.00px;top:249px;font:11px 'Liberation Sans';color:#000;">01/03/2019</span>
<span class="t" style="left:897.70px;top:249px;font:11px 'Liberation Sans';color:#000;">0,00</span>
<span class="t" style="left:962.70px;top:249px;font:11px 'Liberation Sans';color:#000;">0,00</span>
<span class="t" style="left:1029.70px;top:249px;font:11px 'Liberation Sans';color:#000;">3</span>
<span class="t" style="left:1040.13px;top:249px;font:11px 'Liberation Sans';color:#000;transform:scaleX(0.8700);">BANRISUL</span>
<span class="t" style="left:160.70px;top:268px;font:11px 'Liberation Sans';color:#000;">1</span>
<span class="t" style="left:171.11px;top:268px;font:11px 'Liberation Sans';color:#000;transform:scaleX(0.8938);">DM</span>
<span class="t" style="left:248.70px;top:268px;font:11px 'Liberation Sans';color:#000;">23</span>
<span class="t" style="left:266.00px;top:268px;font:11px 'Liberation Sans';color:#000;transform:scaleX(0.8706);">CLIENTE EXEMPLO</span>
<span class="t" style="left:421.70px;top:268px;font:11px 'Liberation Sans';color:#000;">77</span>
<span class="t" style="left:439.00px;top:268px;font:11px 'Liberation Sans';color:#000;">04/02/2019</span>
<span class="t" style="left:531.70px;top:268px;font:11px 'Liberation Sans';color:#000;">0</span>
<span class="t" style="left:543.00px;top:268px;font:11px 'Liberation Sans';color:#000;">7</span>
<span class="t" style="left:600.70px;top:268px;font:11px 'Liberation Sans';color:#000;">0</span>
<span class="t" style="left:612.00px;top:268px;font:11px 'Liberation Sans';color:#000;transform:scaleX(0.9772);">O-Duplicata</span>
<span class="t" style="left:701.70px;top:268px;font:11px 'Liberation Sans';color:#000;">452,00</span>
<span class="t" style="left:741.00px;top:268px;font:11px 'Liberation Sans';color:#000;">31/07/2019</span>
<span class="t" style="left:812.00px;top:268px;font:11px 'Liberation Sans';color:#000;">08/03/2019</span>
<span class="t" style="left:897.70px;top:268px;font:11px 'Liberation Sans';color:#000;">0,00</span>
<span class="t" style="left:962.70px;top:268px;font:11px 'Liberation Sans';color:#000;">0,00</span>
<span class="t" style="left:1029.70px;top:268px;font:11px 'Liberation Sans';color:#000;">3</span>
<span class="t" style="left:1040.13px;top:268px;font:11px 'Liberation Sans';color:#000;transform:scaleX(0.8700);">BANRISUL</span>
<span class="t" style="left:160.70px;top:287px;font:11px 'Liberation Sans';color:#000;">1</span>
<span class="t" style="left:171.11px;top:287px;font:11px 'Liberation Sans';color:#000;transform:scaleX(0.8938);">DM</span>
<span class="t" style="left:248.70px;top:287px;font:11px 'Liberation Sans';color:#000;">23</span>
<span class="t" style="left:266.00px;top:287px;font:11px 'Liberation Sans';color:#000;transform:scaleX(0.8706);">CLIENTE EXEMPLO</span>
<span class="t" style="left:421.70px;top:287px;font:11px 'Liberation Sans';color:#000;">77</span>
<span class="t" style="left:439.00px;top:287px;font:11px 'Liberation Sans';color:#000;">04/02/2019</span>
<span class="t" style="left:531.70px;top:287px;font:11px 'Liberation Sans';color:#000;">0</span>
<span class="t" style="left:543.00px;top:287px;font:11px 'Liberation Sans';color:#000;">8</span>
<span class="t" style="left:600.70px;top:287px;font:11px 'Liberation Sans';color:#000;">0</span>
<span class="t" style="left:612.00px;top:287px;font:11px 'Liberation Sans';color:#000;transform:scaleX(0.9772);">O-Duplicata</span>
<span class="t" style="left:701.70px;top:287px;font:11px 'Liberation Sans';color:#000;">452,00</span>
<span class="t" style="left:741.00px;top:287px;font:11px 'Liberation Sans';color:#000;">30/08/2019</span>
<span class="t" style="left:811.00px;top:287px;font:11px 'Liberation Sans';color:#000;">15/03/2019</span>
<span class="t" style="left:897.70px;top:287px;font:11px 'Liberation Sans';color:#000;">0,00</span>
<span class="t" style="left:962.70px;top:287px;font:11px 'Liberation Sans';color:#000;">0,00</span>
<span class="t" style="left:1029.70px;top:287px;font:11px 'Liberation Sans';color:#000;">3</span>
<span class="t" style="left:1040.13px;top:287px;font:11px 'Liberation Sans';color:#000;transform:scaleX(0.8700);">BANRISUL</span>
<span class="t" style="left:160.70px;top:306px;font:11px 'Liberation Sans';color:#000;">1</span>
<span class="t" style="left:171.11px;top:306px;font:11px 'Liberation Sans';color:#000;transform:scaleX(0.8938);">DM</span>
<span class="t" style="left:248.70px;top:306px;font:11px 'Liberation Sans';color:#000;">23</span>
<span class="t" style="left:266.00px;top:306px;font:11px 'Liberation Sans';color:#000;transform:scaleX(0.8706);">CLIENTE EXEMPLO</span>
<span class="t" style="left:421.70px;top:306px;font:11px 'Liberation Sans';color:#000;">77</span>
<span class="t" style="left:439.00px;top:306px;font:11px 'Liberation Sans';color:#000;">04/02/2019</span>
<span class="t" style="left:531.70px;top:306px;font:11px 'Liberation Sans';color:#000;">0</span>
<span class="t" style="left:543.00px;top:306px;font:11px 'Liberation Sans';color:#000;">9</span>
<span class="t" style="left:600.70px;top:306px;font:11px 'Liberation Sans';color:#000;">0</span>
<span class="t" style="left:612.00px;top:306px;font:11px 'Liberation Sans';color:#000;transform:scaleX(0.9772);">O-Duplicata</span>
<span class="t" style="left:701.70px;top:306px;font:11px 'Liberation Sans';color:#000;">452,00</span>
<span class="t" style="left:741.00px;top:306px;font:11px 'Liberation Sans';color:#000;">29/09/2019</span>
<span class="t" style="left:812.00px;top:306px;font:11px 'Liberation Sans';color:#000;">22/03/2019</span>
<span class="t" style="left:897.70px;top:306px;font:11px 'Liberation Sans';color:#000;">0,00</span>
<span class="t" style="left:962.70px;top:306px;font:11px 'Liberation Sans';color:#000;">0,00</span>
<span class="t" style="left:1029.70px;top:306px;font:11px 'Liberation Sans';color:#000;">3</span>
<span class="t" style="left:1040.13px;top:306px;font:11px 'Liberation Sans';color:#000;transform:scaleX(0.8700);">BANRISUL</span>
<div style="left:109px;top:454px;width:84px;height:20px;background:#e1e1e1;box-sizing:border-box;border:1px solid #adadad;"></div>
<div style="left:195px;top:454px;width:11px;height:20px;background:#e1e1e1;box-sizing:border-box;border:1px solid #adadad;"></div>
<svg style="left:197px;top:462px" width="7" height="4" viewBox="0 0 7 4"><path d="M0.5 0.5H6.5L3.5 3.5Z" fill="#000" stroke="#000" stroke-width="0.6"/></svg>
<svg style="left:129px;top:458px" width="14" height="13" viewBox="0 0 14 13"><path d="M4.5 0H8V4.5H12.5V7.8H8V12H4.5V7.8H0V4.5H4.5Z" fill="#1a62e6"/><path d="M5 0.5H7.5V5H12V5.8H7.5" fill="none" stroke="#5b9bff" stroke-width="0.8"/></svg>
<span class="t" style="left:144.53px;top:458px;font:11px 'Liberation Sans';color:#000;transform:scaleX(0.9690);">Incluir</span>
<div style="left:109px;top:477px;width:98px;height:20px;background:#e1e1e1;box-sizing:border-box;border:1px solid #adadad;"></div>
<svg style="left:124px;top:479px" width="16" height="16" viewBox="0 0 16 16"><path d="M2.6 2.6L11.8 11.8M11.8 2.6L2.6 11.8" stroke="#c8300e" stroke-width="4.6" stroke-linecap="round"/><path d="M2.6 2.6L11.8 11.8M11.8 2.6L2.6 11.8" stroke="#f0582a" stroke-width="3.2" stroke-linecap="round"/><path d="M2.5 2.2L6 5.6M11.5 2.2L8.5 5" stroke="#ff9a70" stroke-width="1" stroke-linecap="round"/></svg>
<span class="t" style="left:142.50px;top:481px;font:11px 'Liberation Sans';color:#000;transform:scaleX(0.9765);">Canc.Pgto</span>
<div style="left:109px;top:500px;width:98px;height:20px;background:#e1e1e1;box-sizing:border-box;border:1px solid #adadad;"></div>
<svg style="left:119px;top:502px" width="15" height="16" viewBox="0 0 15 16"><path d="M1.5 1.5H7.5L10.5 4.5V13.5H1.5Z" fill="#f4f7fc" stroke="#6b7fa8" stroke-width="1"/><path d="M7.5 1.5V4.5H10.5" fill="#d8e0f0" stroke="#6b7fa8" stroke-width="0.8"/><path d="M3 6H8M3 8H8" stroke="#a9b9d9" stroke-width="1"/><rect x="2.5" y="7" width="6" height="5" fill="#b0c0e0"/><path d="M8 7.5L13.5 11L8 14.5Z" fill="#3cb83c"/></svg>
<span class="t" style="left:135.73px;top:504px;font:11px 'Liberation Sans';color:#000;transform:scaleX(0.9746);">Pgto.múltiplo</span>
<div style="left:109px;top:523px;width:98px;height:20px;background:#e1e1e1;box-sizing:border-box;border:1px solid #adadad;"></div>
<svg style="left:116px;top:525px" width="16" height="15" viewBox="0 0 16 15"><path d="M1 5.5L7.5 0.8L14 5.5V13H1Z" fill="#c8c8f0" stroke="#8a8ac8" stroke-width="1"/><rect x="3" y="3.5" width="9" height="4" fill="#f6edc4"/><path d="M1 5.5L7.5 10L14 5.5V13H1Z" fill="#ececfc" stroke="#8a8ac8" stroke-width="1"/><path d="M1 13L6 8.5M14 13L9 8.5" stroke="#9a9ad0" stroke-width="1"/></svg>
<span class="t" style="left:133.35px;top:527px;font:11px 'Liberation Sans';color:#000;transform:scaleX(0.9522);">Emissão carta</span>
<div style="left:210px;top:454px;width:98px;height:20px;background:#e1e1e1;box-sizing:border-box;border:1px solid #adadad;"></div>
<svg style="left:234px;top:457px" width="17" height="16" viewBox="0 0 17 16"><rect x="1" y="3.5" width="11" height="10.5" fill="#b4c4e8" stroke="#6a80b0" stroke-width="1.3"/><rect x="2.2" y="4.7" width="8.6" height="8.1" fill="none" stroke="#f4f8ff" stroke-width="1"/><path d="M2 4.5C3.5 3 5.5 2 8 1.2C9.5 0.6 12 0.3 14 0.8C15.3 1.3 15.6 3 15.3 4.6C15 6.2 13.5 6.8 11.8 6.9L9 7.5C8 7.8 7 7 6.8 6.3L4 6Z" fill="#e6b040" stroke="#b07a10" stroke-width="0.6"/><path d="M10 1.6C12 1.2 13.8 1.6 14.4 2.4" stroke="#fff4c8" stroke-width="1" fill="none"/></svg>
<span class="t" style="left:251.80px;top:458px;font:11px 'Liberation Sans';color:#000;transform:scaleX(0.9727);">Alterar</span>
<div style="left:210px;top:477px;width:98px;height:20px;background:#e1e1e1;box-sizing:border-box;border:1px solid #adadad;"></div>
<svg style="left:219px;top:480px" width="14" height="16" viewBox="0 0 14 16"><path d="M1.5 1.5H7.5L10.5 4.5V13.5H1.5Z" fill="#f4f7fc" stroke="#6b7fa8" stroke-width="1"/><path d="M7.5 1.5V4.5H10.5" fill="#d8e0f0" stroke="#6b7fa8" stroke-width="0.8"/><path d="M2 11L4.5 9L6 10L8 7" stroke="#d83030" stroke-width="1" fill="none"/><text x="7" y="13.8" font-family="Liberation Sans" font-weight="bold" font-size="11" fill="#1c9a2a">$</text></svg>
<span class="t" style="left:235.70px;top:481px;font:11px 'Liberation Sans';color:#000;transform:scaleX(0.9785);">Acerto Finan.</span>
<div style="left:210px;top:500px;width:98px;height:20px;background:#e1e1e1;box-sizing:border-box;border:1px solid #adadad;"></div>
<svg style="left:212px;top:502px" width="16" height="15" viewBox="0 0 16 15"><path d="M1 6C1 3.5 3 2.5 5 2.2L9 1.8C12 3.5 13.8 6 14.2 8.5V10.5C13 12.8 10.5 13.6 7.5 13.6L3.5 13C1.2 12 0.6 10.5 0.8 8.5Z" fill="#d4d4d4" stroke="#8a8a8a" stroke-width="0.6"/><path d="M1.8 5.5L5 2.6L8.5 2.2L9.5 9.5L2 10.5Z" fill="#f6f6f6"/><path d="M5.5 4L9.2 2.6L12.8 7L9 10.5Z" fill="#3c98ee"/><path d="M4 2.3L8.8 1.9L9.4 2.8L5.2 3.4Z" fill="#dff4ff"/><path d="M2 10.8L9 10L14.2 9.5L13 12L8 13.6L3.2 12.6Z" fill="#4a4a4a"/></svg>
<span class="t" style="left:231.00px;top:504px;font:11px 'Liberation Sans';color:#000;transform:scaleX(0.9959);">Comprov.pagto</span>
<div style="left:210px;top:523px;width:98px;height:20px;background:#e1e1e1;box-sizing:border-box;border:1px solid #adadad;"></div>
<svg style="left:216px;top:526px" width="15" height="15" viewBox="0 0 15 15"><rect x="0.7" y="0.7" width="12.6" height="12.6" fill="#eaeaf6" stroke="#3a8ff0" stroke-width="1.4"/><rect x="0.7" y="0.7" width="12.6" height="2" fill="#3a8ff0"/><circle cx="6" cy="7" r="3.2" fill="#bfe2f6" stroke="#4a6e8a" stroke-width="1"/><path d="M8.3 9.3L11.5 12.5" stroke="#f0902a" stroke-width="2"/></svg>
<span class="t" style="left:232.80px;top:527px;font:11px 'Liberation Sans';color:#000;transform:scaleX(0.9789);">Cons.cadastro</span>
<div style="left:311px;top:454px;width:98px;height:20px;background:#e1e1e1;box-sizing:border-box;border:1px solid #adadad;"></div>
<svg style="left:329px;top:457px" width="15" height="15" viewBox="0 0 15 15"><rect x="0.7" y="0.7" width="12.6" height="12.6" fill="#eaeaf6" stroke="#3a8ff0" stroke-width="1.4"/><rect x="0.7" y="0.7" width="12.6" height="2" fill="#3a8ff0"/><circle cx="6" cy="7" r="3.2" fill="#bfe2f6" stroke="#4a6e8a" stroke-width="1"/><path d="M8.3 9.3L11.5 12.5" stroke="#f0902a" stroke-width="2"/></svg>
<span class="t" style="left:345.80px;top:458px;font:11px 'Liberation Sans';color:#000;transform:scaleX(0.9617);">Consultar</span>
<div style="left:311px;top:477px;width:84px;height:20px;background:#e1e1e1;box-sizing:border-box;border:1px solid #adadad;"></div>
<div style="left:397px;top:477px;width:11px;height:20px;background:#e1e1e1;box-sizing:border-box;border:1px solid #adadad;"></div>
<svg style="left:399px;top:485px" width="7" height="4" viewBox="0 0 7 4"><path d="M0.5 0.5H6.5L3.5 3.5Z" fill="#000" stroke="#000" stroke-width="0.6"/></svg>
<svg style="left:323px;top:479px" width="14" height="16" viewBox="0 0 14 16"><path d="M1.5 1.5H7.5L10.5 4.5V13.5H1.5Z" fill="#f4f7fc" stroke="#6b7fa8" stroke-width="1"/><path d="M7.5 1.5V4.5H10.5" fill="#d8e0f0" stroke="#6b7fa8" stroke-width="0.8"/><path d="M4 7.5H8V5.5L12.5 9L8 12.5V10.5H4Z" fill="#36c236" stroke="#1d8a1d" stroke-width="0.6"/></svg>
<span class="t" style="left:339.58px;top:481px;font:11px 'Liberation Sans';color:#000;transform:scaleX(0.9239);">Remessa</span>
<div style="left:311px;top:500px;width:98px;height:20px;background:#e1e1e1;box-sizing:border-box;border:1px solid #adadad;"></div>
<svg style="left:324px;top:502px" width="14" height="17" viewBox="0 0 14 17"><path d="M1.5 1.5H7.5L10.5 4.5V14.5H1.5Z" fill="#f4f7fc" stroke="#6b7fa8" stroke-width="1"/><path d="M7.5 1.5V4.5H10.5" fill="#d8e0f0" stroke="#6b7fa8" stroke-width="0.8"/><circle cx="4.5" cy="3" r="2.8" fill="#e02020"/><text x="3.5" y="14.5" font-family="Liberation Sans" font-weight="bold" font-size="11" fill="#1c9a2a">$</text></svg>
<span class="t" style="left:340.65px;top:504px;font:11px 'Liberation Sans';color:#000;transform:scaleX(1.0491);">Inc.c/pagto</span>
<div style="left:311px;top:523px;width:98px;height:20px;background:#e1e1e1;box-sizing:border-box;border:1px solid #adadad;"></div>
<svg style="left:322px;top:525px" width="14" height="17" viewBox="0 0 14 17"><rect x="0.5" y="2" width="11.5" height="13.5" fill="#fafafa" stroke="#a8a8a8" stroke-width="1"/><path d="M2 1V3M4.5 1V3M7 1V3M9.5 1V3" stroke="#909090" stroke-width="1"/><path d="M1.5 6H11M1.5 8.5H11M1.5 11H11M1.5 13.5H11" stroke="#a8c0e0" stroke-width="1"/></svg>
<span class="t" style="left:337.07px;top:527px;font:11px 'Liberation Sans';color:#000;transform:scaleX(1.0317);">Movtos/Obs.</span>
<div style="left:412px;top:454px;width:98px;height:20px;background:#e1e1e1;box-sizing:border-box;border:1px solid #adadad;"></div>
<svg style="left:438px;top:462px" width="14" height="6" viewBox="0 0 14 6"><rect x="0" y="0" width="12.3" height="4.2" fill="#1a62e6"/><rect x="0.5" y="0.4" width="11.5" height="1.2" fill="#4f8ff5"/></svg>
<span class="t" style="left:453.25px;top:458px;font:11px 'Liberation Sans';color:#000;transform:scaleX(0.9469);">Excluir</span>
<div style="left:412px;top:477px;width:84px;height:20px;background:#e1e1e1;box-sizing:border-box;border:1px solid #adadad;"></div>
<div style="left:498px;top:477px;width:11px;height:20px;background:#e1e1e1;box-sizing:border-box;border:1px solid #adadad;"></div>
<svg style="left:500px;top:485px" width="7" height="4" viewBox="0 0 7 4"><path d="M0.5 0.5H6.5L3.5 3.5Z" fill="#000" stroke="#000" stroke-width="0.6"/></svg>
<svg style="left:426px;top:479px" width="14" height="16" viewBox="0 0 14 16"><path d="M1.5 1.5H7.5L10.5 4.5V13.5H1.5Z" fill="#f4f7fc" stroke="#6b7fa8" stroke-width="1"/><path d="M7.5 1.5V4.5H10.5" fill="#d8e0f0" stroke="#6b7fa8" stroke-width="0.8"/><circle cx="8" cy="9.8" r="4.4" fill="#2aa52a"/><path d="M5.8 9.8L7.5 11.5L10.5 8" fill="none" stroke="#fff" stroke-width="1.5"/></svg>
<span class="t" style="left:442.48px;top:481px;font:11px 'Liberation Sans';color:#000;transform:scaleX(1.0158);">Retorno</span>
<div style="left:412px;top:500px;width:98px;height:20px;background:#e1e1e1;box-sizing:border-box;border:1px solid #adadad;"></div>
<svg style="left:426px;top:502px" width="13" height="16" viewBox="0 0 13 16"><path d="M1.5 1.5H7.5L10.5 4.5V13.5H1.5Z" fill="#f4f7fc" stroke="#6b7fa8" stroke-width="1"/><path d="M7.5 1.5V4.5H10.5" fill="#d8e0f0" stroke="#6b7fa8" stroke-width="0.8"/><path d="M2.5 8.5L5 11L9.5 6" fill="none" stroke="#2aa52a" stroke-width="2.2"/></svg>
<span class="t" style="left:443.80px;top:504px;font:11px 'Liberation Sans';color:#000;transform:scaleX(0.9386);">Aceite DDA</span>
<div style="left:412px;top:523px;width:98px;height:20px;background:#e1e1e1;box-sizing:border-box;border:1px solid #adadad;"></div>
<svg style="left:427px;top:526px" width="17" height="14" viewBox="0 0 17 14"><path d="M0 5C2 2 6 2.5 9 4V0.5L16 7L9 12.8V9C6 7.5 3 7 0 8Z" fill="#3cc23c" stroke="#1f8a1f" stroke-width="0.6"/><path d="M1 5C3 3.2 6 3.5 9 5" stroke="#9ef09e" stroke-width="1" fill="none"/></svg>
<span class="t" style="left:445.80px;top:527px;font:11px 'Liberation Sans';color:#000;transform:scaleX(0.9880);">Alt.Vencto</span>
<div style="left:513px;top:454px;width:84px;height:20px;background:#e1e1e1;box-sizing:border-box;border:1px solid #adadad;"></div>
<div style="left:599px;top:454px;width:11px;height:20px;background:#e1e1e1;box-sizing:border-box;border:1px solid #adadad;"></div>
<svg style="left:601px;top:462px" width="7" height="4" viewBox="0 0 7 4"><path d="M0.5 0.5H6.5L3.5 3.5Z" fill="#000" stroke="#000" stroke-width="0.6"/></svg>
<svg style="left:517px;top:457px" width="15" height="14" viewBox="0 0 15 14"><path d="M3 2L12 0.5L14 4L5 6Z" fill="#30b030" stroke="#1c7a1c" stroke-width="0.6"/><path d="M3 4L12 2.5L14 6.5L5 8.5Z" fill="#40c040" stroke="#1c7a1c" stroke-width="0.6"/><ellipse cx="4" cy="9.5" rx="3.8" ry="2.5" fill="#e8b83a" stroke="#a07010" stroke-width="0.6"/><ellipse cx="6" cy="11" rx="3.8" ry="2" fill="#f0c850" stroke="#a07010" stroke-width="0.6"/></svg>
<span class="t" style="left:534.22px;top:458px;font:11px 'Liberation Sans';color:#000;transform:scaleX(0.9845);">Pgto.Parcial</span>
<div style="left:513px;top:477px;width:98px;height:20px;background:#e1e1e1;box-sizing:border-box;border:1px solid #adadad;"></div>
<svg style="left:517px;top:479px" width="17" height="17" viewBox="0 0 17 17"><rect x="0.8" y="0.8" width="14" height="14" rx="1.5" fill="#fff" stroke="#000" stroke-width="1.6"/><path d="M3.5 2.5V10.5M6 2.5V10.5M9 2.5V10.5M11.5 2.5V10.5" stroke="#000" stroke-width="1.6"/><rect x="2" y="11" width="11.5" height="2.5" fill="#444"/></svg>
<span class="t" style="left:535.80px;top:481px;font:11px 'Liberation Sans';color:#000;transform:scaleX(0.9581);">Aceite Cód.Bar</span>
<div style="left:513px;top:500px;width:98px;height:20px;background:#e1e1e1;box-sizing:border-box;border:1px solid #adadad;"></div>
<svg style="left:518px;top:502px" width="16" height="16" viewBox="0 0 16 16"><rect x="0.7" y="0.7" width="13" height="13" rx="1.2" fill="#dcdcf6" stroke="#0a8af0" stroke-width="1.4"/><rect x="1.2" y="1.2" width="12" height="3" fill="#0a88ee"/><rect x="2" y="1.6" width="10.5" height="0.8" fill="#9cd0ff"/><rect x="1.4" y="4.2" width="11.6" height="2.8" fill="#f4f0fa"/><rect x="1.4" y="7" width="11.6" height="3" fill="#ff4a10"/><rect x="1.4" y="10" width="11.6" height="3" fill="#d4d4f2"/></svg>
<span class="t" style="left:536.60px;top:504px;font:11px 'Liberation Sans';color:#000;transform:scaleX(0.9761);">Cons.consolid.</span>
<div style="left:513px;top:523px;width:98px;height:20px;background:#e1e1e1;box-sizing:border-box;border:1px solid #adadad;"></div>
<svg style="left:530px;top:525px" width="16" height="16" viewBox="0 0 16 16"><rect x="0.5" y="1.5" width="11" height="13" fill="#f8f8ff" stroke="#8a8ac0" stroke-width="1"/><rect x="1" y="1.5" width="10" height="3" fill="#e0e0f0"/><text x="2" y="12" font-family="Liberation Sans" font-weight="bold" font-size="8" fill="#e05a10">14</text><rect x="8" y="0" width="6.5" height="8" fill="#7ac0f0" stroke="#4a8ac0" stroke-width="0.6"/></svg>
<span class="t" style="left:548.80px;top:527px;font:11px 'Liberation Sans';color:#000;transform:scaleX(0.9870);">Alt. Fluxo</span>
<div style="left:614px;top:454px;width:84px;height:20px;background:#e1e1e1;box-sizing:border-box;border:1px solid #adadad;"></div>
<div style="left:700px;top:454px;width:11px;height:20px;background:#e1e1e1;box-sizing:border-box;border:1px solid #adadad;"></div>
<svg style="left:702px;top:462px" width="7" height="4" viewBox="0 0 7 4"><path d="M0.5 0.5H6.5L3.5 3.5Z" fill="#000" stroke="#000" stroke-width="0.6"/></svg>
<svg style="left:624px;top:457px" width="14" height="15" viewBox="0 0 14 15"><path d="M4 0.5L6 2L8.5 0.5L8 3.5C11 5 12.3 8 12.3 10.5C12.3 13 10 14 6.2 14C2.4 14 0 13 0 10.5C0 8 1.5 5 4.5 3.5Z" fill="#d6a020" stroke="#8a6010" stroke-width="0.6"/><path d="M7.5 7.5C6.5 6.8 4.5 7 4.5 8.3C4.5 9.7 8 9.3 8 10.8C8 12 6 12.3 4.8 11.5M6.2 6.5V12.5" stroke="#222" stroke-width="1.1" fill="none"/></svg>
<span class="t" style="left:639.36px;top:458px;font:11px 'Liberation Sans';color:#000;transform:scaleX(1.0354);">Pgto.Total</span>
<div style="left:614px;top:477px;width:84px;height:20px;background:#e1e1e1;box-sizing:border-box;border:1px solid #adadad;"></div>
<div style="left:700px;top:477px;width:11px;height:20px;background:#e1e1e1;box-sizing:border-box;border:1px solid #adadad;"></div>
<svg style="left:702px;top:485px" width="7" height="4" viewBox="0 0 7 4"><path d="M0.5 0.5H6.5L3.5 3.5Z" fill="#000" stroke="#000" stroke-width="0.6"/></svg>
<svg style="left:632px;top:479px" width="16" height="15" viewBox="0 0 16 15"><path d="M1 6C1 3.5 3 2.5 5 2.2L9 1.8C12 3.5 13.8 6 14.2 8.5V10.5C13 12.8 10.5 13.6 7.5 13.6L3.5 13C1.2 12 0.6 10.5 0.8 8.5Z" fill="#d4d4d4" stroke="#8a8a8a" stroke-width="0.6"/><path d="M1.8 5.5L5 2.6L8.5 2.2L9.5 9.5L2 10.5Z" fill="#f6f6f6"/><path d="M5.5 4L9.2 2.6L12.8 7L9 10.5Z" fill="#3c98ee"/><path d="M4 2.3L8.8 1.9L9.4 2.8L5.2 3.4Z" fill="#dff4ff"/><path d="M2 10.8L9 10L14.2 9.5L13 12L8 13.6L3.2 12.6Z" fill="#4a4a4a"/></svg>
<span class="t" style="left:649.21px;top:481px;font:11px 'Liberation Sans';color:#000;transform:scaleX(0.9933);">Boleto</span>
<div style="left:614px;top:500px;width:98px;height:20px;background:#e1e1e1;box-sizing:border-box;border:1px solid #adadad;"></div>
<svg style="left:621px;top:502px" width="17" height="17" viewBox="0 0 17 17"><path d="M0.5 4C2 1.5 5 0.5 8 0.8C11 1.2 12.5 2.5 12 4C11.5 5.5 8.5 6 6 6L3 7Z" fill="#e8c060" stroke="#b08820" stroke-width="0.7"/><path d="M5 6.5H10V9.5H7V12H10V15H4V9H5Z" fill="#30b030" stroke="#1a7a1a" stroke-width="0.7"/><path d="M10 6H15V10H10Z" fill="#28a028" stroke="#1a7a1a" stroke-width="0.7"/></svg>
<span class="t" style="left:638.53px;top:504px;font:11px 'Liberation Sans';color:#000;transform:scaleX(0.9742);">Dad.Depósito</span>
<div style="left:614px;top:523px;width:98px;height:20px;background:#e1e1e1;box-sizing:border-box;border:1px solid #adadad;"></div>
<svg style="left:624px;top:526px" width="15" height="15" viewBox="0 0 15 15"><rect x="0.5" y="1.5" width="10" height="12" fill="#dde6f8" stroke="#7a8ab8" stroke-width="1"/><path d="M2 4H8M2 6.5H8M2 9H6" stroke="#9aaad0" stroke-width="0.8"/><path d="M4 12L13 1.5L14 2.5L5.5 13Z" fill="#e83a2a" stroke="#a02010" stroke-width="0.5"/></svg>
<span class="t" style="left:639.98px;top:527px;font:11px 'Liberation Sans';color:#000;transform:scaleX(1.0230);">Manut.Notas</span>
<div style="left:726px;top:454px;width:23px;height:20px;background:#e1e1e1;box-sizing:border-box;border:1px solid #adadad;"></div>
<svg style="left:730px;top:459px" width="15" height="10" viewBox="0 0 15 10"><ellipse cx="3.5" cy="6" rx="3.2" ry="2.5" fill="#c8e4f8" stroke="#505860" stroke-width="1.2"/><ellipse cx="10.5" cy="6" rx="3.2" ry="2.5" fill="#c8e4f8" stroke="#505860" stroke-width="1.2"/><path d="M1.5 3.5L4 1.5H10L12.5 3.5" stroke="#606870" stroke-width="1.5" fill="none"/></svg>
<div style="left:752px;top:454px;width:23px;height:20px;background:#e1e1e1;box-sizing:border-box;border:1px solid #adadad;"></div>
<svg style="left:755px;top:456px" width="17" height="16" viewBox="0 0 17 16"><rect x="5" y="2" width="11" height="13" fill="#e8eef8" stroke="#3a5ab0" stroke-width="1"/><path d="M7 5H14M7 7.5H14M7 10H14M7 12.5H14" stroke="#8aa0d0" stroke-width="0.8"/><rect x="0" y="0" width="9" height="9" fill="#1e8a3a"/><path d="M2 2L7 7M7 2L2 7" stroke="#fff" stroke-width="1.5"/></svg>
<div style="left:778px;top:454px;width:23px;height:20px;background:#e1e1e1;box-sizing:border-box;border:1px solid #adadad;"></div>
<svg style="left:782px;top:456px" width="15" height="16" viewBox="0 0 15 16"><path d="M1.5 1.5H9.5L12.5 4.5V14.5H1.5Z" fill="#f4f7fc" stroke="#6b7fa8" stroke-width="1"/><path d="M9.5 1.5V4.5H12.5" fill="#d8e0f0" stroke="#6b7fa8" stroke-width="0.8"/><rect x="3" y="8" width="8" height="4" fill="#a8b8e0"/></svg>
<div style="left:726px;top:477px;width:23px;height:20px;background:#e1e1e1;box-sizing:border-box;border:1px solid #adadad;"></div>
<svg style="left:729px;top:479px" width="17" height="17" viewBox="0 0 17 17"><rect x="0.7" y="0.7" width="14" height="14" rx="1.5" fill="#fff" stroke="#2a8ff0" stroke-width="1.4"/><rect x="1" y="1" width="13.5" height="3" fill="#3a9ff8"/><path d="M4 5V14M1.5 7.5H7M1.5 10.5H7" stroke="#e86040" stroke-width="1"/><path d="M5 7C7 4.5 10 4 13 4.5C15 5 15.5 6.5 14.5 8C13 9.5 10 9.5 7.5 9.5Z" fill="#e8b848" stroke="#a87818" stroke-width="0.7"/></svg>
<div style="left:752px;top:477px;width:23px;height:20px;background:#e1e1e1;box-sizing:border-box;border:1px solid #adadad;"></div>
<svg style="left:755px;top:479px" width="16" height="16" viewBox="0 0 16 16"><rect x="0.7" y="0.7" width="13.6" height="13.6" rx="1.5" fill="#fff" stroke="#2a8ff0" stroke-width="1.4"/><rect x="1" y="1" width="13" height="2.5" fill="#3a9ff8"/><path d="M5 12V5.5M2.8 7.5L5 4.5L7.2 7.5" stroke="#e02020" stroke-width="1.8" fill="none"/><path d="M10 4.5V11M7.8 9L10 12L12.2 9" stroke="#1a8a2a" stroke-width="1.8" fill="none"/></svg>
<div style="left:778px;top:477px;width:23px;height:20px;background:#e1e1e1;box-sizing:border-box;border:1px solid #adadad;"></div>
<svg style="left:783px;top:482px" width="14" height="12" viewBox="0 0 14 12"><path d="M6 0.5C10 0.5 12 2.5 12 5C12 7 10 7 9 7C8 7 7.5 8 8 9C8.5 10 6.5 10.5 5 10.5C2 10.5 0 8.5 0 5.5C0 2.5 2.5 0.5 6 0.5Z" fill="#f0c878" stroke="#c89848" stroke-width="0.6"/><circle cx="4" cy="3.5" r="1.2" fill="#4a8ae0"/><circle cx="7.5" cy="3" r="1.2" fill="#3cb83c"/><circle cx="9.5" cy="5" r="1" fill="#e04040"/></svg>
<div style="left:726px;top:500px;width:23px;height:20px;background:#e1e1e1;box-sizing:border-box;border:1px solid #adadad;"></div>
<svg style="left:730px;top:504px" width="16" height="13" viewBox="0 0 16 13"><path d="M0.5 5L6 1L14 4.5L9 9Z" fill="#f4f4f4" stroke="#a0a0a0" stroke-width="0.8"/><path d="M0.5 5V7.5L9 11V9Z" fill="#c8c8c8" stroke="#a0a0a0" stroke-width="0.6"/><path d="M9 9L14 4.5V7L9 11Z" fill="#b0b0b0"/><path d="M5 3L8 2.5L8.5 4.5" fill="#3a8ae0"/></svg>
<div style="left:752px;top:500px;width:23px;height:20px;background:#e1e1e1;box-sizing:border-box;border:1px solid #adadad;"></div>
<svg style="left:756px;top:503px" width="16" height="15" viewBox="0 0 16 15"><path d="M7 0L8.5 2.2L11 1.2L11.3 3.8L14 4.3L12.8 6.7L14.3 8.8L11.8 9.8L11.6 12.5L9 11.8L7.2 14L5.5 11.8L3 12.6L2.7 10L0.2 9.3L1.5 7L0 4.6L2.6 4L3 1.3L5.5 2.2Z" fill="#a8a8e0" stroke="#7070b8" stroke-width="0.8"/><circle cx="7.1" cy="7" r="2.5" fill="#e0e0f4" stroke="#7070b8" stroke-width="0.8"/></svg>
<div style="left:778px;top:500px;width:23px;height:20px;background:#e1e1e1;box-sizing:border-box;border:1px solid #adadad;"></div>
<svg style="left:782px;top:504px" width="16" height="14" viewBox="0 0 16 14"><rect x="0.7" y="0.7" width="13.3" height="11.3" fill="#f4f8ff" stroke="#2a6ad0" stroke-width="1.4"/><rect x="1" y="1" width="12.6" height="1.5" fill="#2a6ad0"/><circle cx="3.5" cy="5" r="1.2" fill="#f08030"/><circle cx="3.5" cy="9" r="1.2" fill="#f08030"/><path d="M5.5 5H12M5.5 9H12" stroke="#8090b0" stroke-width="1"/></svg>
<div style="left:726px;top:523px;width:23px;height:20px;background:#e1e1e1;box-sizing:border-box;border:1px solid #adadad;"></div>
<svg style="left:730px;top:524px" width="15" height="16" viewBox="0 0 15 16"><path d="M1 8H12.5V13L11 14.5H2L0.5 13Z" fill="#d0d0d0" stroke="#808080" stroke-width="0.7"/><path d="M1 8L3 6.5H11L12.5 8" fill="#f0f0f0" stroke="#808080" stroke-width="0.7"/><path d="M4.5 0.5H8.5V4H11L6.5 8.5L2 4H4.5Z" fill="#3cc23c" stroke="#1a8a1a" stroke-width="0.6"/></svg>
<div style="left:752px;top:523px;width:23px;height:20px;background:#e1e1e1;box-sizing:border-box;border:1px solid #adadad;"></div>
<svg style="left:756px;top:524px" width="14" height="16" viewBox="0 0 14 16"><rect x="0.7" y="0.7" width="11.6" height="13.6" rx="1" fill="#fff" stroke="#2a8ff0" stroke-width="1.4"/><path d="M3 5L5 7L9 2.5M3 10L5 12L9 7.5" stroke="#d02020" stroke-width="1.2" fill="none"/></svg>
<div style="left:809px;top:453px;width:1px;height:22px;background:#a0a0a0;"></div>
<div style="left:872px;top:453px;width:1px;height:22px;background:#a0a0a0;"></div>
<div style="left:816px;top:454px;width:23px;height:20px;background:#e1e1e1;box-sizing:border-box;border:1px solid #adadad;"></div>
<div style="left:842px;top:454px;width:23px;height:20px;background:#e1e1e1;box-sizing:border-box;border:1px solid #adadad;"></div>
<div style="left:821px;top:458px;width:12px;height:12px;background:#fff;box-sizing:border-box;border:1px solid #707070;"></div>
<div style="left:847px;top:458px;width:12px;height:12px;background:linear-gradient(#f4f4f4,#fff);box-sizing:border-box;border:1px solid #707070;"></div>
<svg style="left:821px;top:457px" width="14" height="13" viewBox="0 0 14 13"><path d="M2.5 6.5L5.5 10L11.5 1.5" fill="none" stroke="#0a3fb0" stroke-width="2.6" stroke-linecap="round" stroke-linejoin="round"/></svg>
<div style="left:879px;top:454px;width:98px;height:20px;background:#e1e1e1;box-sizing:border-box;border:1px solid #adadad;"></div>
<div style="left:979px;top:454px;width:11px;height:20px;background:#e1e1e1;box-sizing:border-box;border:1px solid #adadad;"></div>
<svg style="left:981px;top:462px" width="7" height="4" viewBox="0 0 7 4"><path d="M0.5 0.5H6.5L3.5 3.5Z" fill="#000" stroke="#000" stroke-width="0.6"/></svg>
<svg style="left:890px;top:456px" width="15" height="15" viewBox="0 0 15 15"><g fill="none" stroke="#2fba2f" stroke-width="3.3"><path d="M2.4 6A5 5 0 0 1 6.5 2.2"/><path d="M9.8 2.8A5 5 0 0 1 11.8 9.6"/><path d="M9.8 12A5 5 0 0 1 3 10.2"/></g><g fill="#0f9a0f"><path d="M0.3 3.5L4.8 4.2L2 8Z"/><path d="M13.5 1.5L12.5 6L9 3.2Z"/><path d="M6 14L8.5 10.5L10.8 13.8Z"/></g><g fill="none" stroke="#9af27a" stroke-width="1"><path d="M3 6A4.4 4.4 0 0 1 6.3 3"/><path d="M10.3 4A4.4 4.4 0 0 1 11.2 8.5"/></g></svg>
<span class="t" style="left:907.42px;top:458px;font:11px 'Liberation Sans';color:#000;transform:scaleX(0.9763);">F5-Atualizar</span>
<div style="left:995px;top:454px;width:83px;height:20px;background:#e1e1e1;box-sizing:border-box;border:1px solid #adadad;"></div>
<div style="left:1080px;top:454px;width:11px;height:20px;background:#e1e1e1;box-sizing:border-box;border:1px solid #adadad;"></div>
<svg style="left:1082px;top:462px" width="7" height="4" viewBox="0 0 7 4"><path d="M0.5 0.5H6.5L3.5 3.5Z" fill="#000" stroke="#000" stroke-width="0.6"/></svg>
<svg style="left:1004px;top:456px" width="16" height="16" viewBox="0 0 16 16"><defs><linearGradient id="fg" x1="0" x2="1"><stop offset="0" stop-color="#f0f0f0"/><stop offset="0.5" stop-color="#a8a8a8"/><stop offset="1" stop-color="#505050"/></linearGradient></defs><path d="M0.5 2.5L6 9V14L9 12.5V9L14.5 2.5" fill="url(#fg)" stroke="#707070" stroke-width="0.7"/><ellipse cx="7.5" cy="2.5" rx="7" ry="2.3" fill="#d8d8d8" stroke="#707070" stroke-width="0.7"/><path d="M7 9.5L9.5 12L14 5.5" stroke="#1a5ad0" stroke-width="2.2" fill="none"/></svg>
<span class="t" style="left:1021.09px;top:458px;font:11px 'Liberation Sans';color:#000;transform:scaleX(1.0111);">F9-Filtros</span>
<div style="left:995px;top:509px;width:98px;height:42px;background:#e1e1e1;box-sizing:border-box;border:1px solid #adadad;"></div>
<svg style="left:1026px;top:522px" width="16" height="16" viewBox="0 0 16 16"><path d="M5 2L12 0.5V14.5L5 13Z" fill="#9a9ad8" stroke="#5a5a9a" stroke-width="0.7"/><rect x="12" y="0.5" width="3" height="14" fill="#6a6aa8"/><path d="M0 6H3V4L6.5 7.3L3 10.5V8.5H0Z" fill="#3cc23c" stroke="#1a8a1a" stroke-width="0.5"/></svg>
<span class="t" style="left:1044.70px;top:525px;font:11px 'Liberation Sans';color:#000;transform:scaleX(0.8850);">Sair</span>
<div style="left:1045px;top:535px;width:7px;height:1px;background:#000;"></div>
<div style="left:952px;top:469px;width:6px;height:1px;background:#000;"></div>
<div style="left:1076px;top:72px;width:16px;height:353px;background:#f0f0f0;"></div>
<svg style="left:1079px;top:99px" width="9" height="9" viewBox="0 0 9 9"><path d="M1 6.5L4.5 2.5L8 6.5" fill="none" stroke="#606060" stroke-width="2"/></svg>
<svg style="left:1079px;top:412px" width="9" height="9" viewBox="0 0 9 9"><path d="M1 2L4.5 6L8 2" fill="none" stroke="#606060" stroke-width="2"/></svg>
<svg style="left:0;top:0" width="1129" height="807" viewBox="0 0 1129 807"><defs><clipPath id="cin"><rect x="99" y="6" width="1006" height="558"/></clipPath><clipPath id="cout"><path d="M0 0H1129V807H0Z M99 6V564H1105V6Z" clip-rule="evenodd"/></clipPath></defs><g clip-path="url(#cout)" stroke="#0a2896" stroke-width="2" fill="none" shape-rendering="crispEdges"><path d="M116.1 469.3L47.1 584"/><path d="M227.7 463.6L177.3 584"/><path d="M320.4 461.1L309.3 584"/><path d="M430.5 466L419.6 584"/><path d="M487.1 518.1L510.2 584"/><path d="M559.8 471L636.7 584"/><path d="M645.4 472.2L796 593"/><path d="M120.8 492.1L65.7 662"/><path d="M260.9 492L202.1 662"/><path d="M352.4 493.3L355.1 662"/><path d="M438.7 490.8L459 662"/><path d="M526.8 492.1L580.7 662"/><path d="M625.5 490.8L733 662"/><path d="M146.8 514.4L105.4 731"/><path d="M273.6 513.2L246.8 731"/><path d="M380.4 516.4L387.1 731"/><path d="M470.5 540.4L525.5 731"/><path d="M590.8 540.4L667.4 731"/><path d="M706.7 537.5L808 731"/><path d="M770.7 517.4L935 591.8"/></g><g clip-path="url(#cin)" stroke="#1838a8" stroke-width="1.3" fill="none"><path d="M116.1 469.3L47.1 584"/><path d="M227.7 463.6L177.3 584"/><path d="M320.4 461.1L309.3 584"/><path d="M430.5 466L419.6 584"/><path d="M487.1 518.1L510.2 584"/><path d="M559.8 471L636.7 584"/><path d="M645.4 472.2L796 593"/><path d="M120.8 492.1L65.7 662"/><path d="M260.9 492L202.1 662"/><path d="M352.4 493.3L355.1 662"/><path d="M438.7 490.8L459 662"/><path d="M526.8 492.1L580.7 662"/><path d="M625.5 490.8L733 662"/><path d="M146.8 514.4L105.4 731"/><path d="M273.6 513.2L246.8 731"/><path d="M380.4 516.4L387.1 731"/><path d="M470.5 540.4L525.5 731"/><path d="M590.8 540.4L667.4 731"/><path d="M706.7 537.5L808 731"/><path d="M770.7 517.4L935 591.8"/></g></svg>
<div style="left:23px;top:583px;width:36px;height:36px;background:#000;border-radius:10px;"></div>
<div style="left:25px;top:585px;width:28px;height:28px;background:#0a2a9b;border-radius:8px;"></div>
<span class="t" style="left:35.50px;top:592px;font:bold 13px 'Liberation Sans';color:#fff;">1</span>
<div style="left:155px;top:583px;width:36px;height:36px;background:#000;border-radius:10px;"></div>
<div style="left:157px;top:585px;width:28px;height:28px;background:#0a2a9b;border-radius:8px;"></div>
<span class="t" style="left:167.50px;top:592px;font:bold 13px 'Liberation Sans';color:#fff;">2</span>
<div style="left:292px;top:583px;width:36px;height:36px;background:#000;border-radius:10px;"></div>
<div style="left:294px;top:585px;width:28px;height:28px;background:#0a2a9b;border-radius:8px;"></div>
<span class="t" style="left:304.50px;top:592px;font:bold 13px 'Liberation Sans';color:#fff;">3</span>
<div style="left:402px;top:583px;width:36px;height:36px;background:#000;border-radius:10px;"></div>
<div style="left:404px;top:585px;width:28px;height:28px;background:#0a2a9b;border-radius:8px;"></div>
<span class="t" style="left:414.00px;top:592px;font:bold 13px 'Liberation Sans';color:#fff;">4</span>
<div style="left:500px;top:583px;width:36px;height:36px;background:#000;border-radius:10px;"></div>
<div style="left:502px;top:585px;width:28px;height:28px;background:#0a2a9b;border-radius:8px;"></div>
<span class="t" style="left:512.50px;top:592px;font:bold 13px 'Liberation Sans';color:#fff;">5</span>
<div style="left:630px;top:583px;width:36px;height:36px;background:#000;border-radius:10px;"></div>
<div style="left:632px;top:585px;width:28px;height:28px;background:#0a2a9b;border-radius:8px;"></div>
<span class="t" style="left:642.50px;top:592px;font:bold 13px 'Liberation Sans';color:#fff;">6</span>
<div style="left:794px;top:588px;width:36px;height:36px;background:#000;border-radius:10px;"></div>
<div style="left:796px;top:590px;width:28px;height:28px;background:#0a2a9b;border-radius:8px;"></div>
<span class="t" style="left:806.50px;top:597px;font:bold 13px 'Liberation Sans';color:#fff;">7</span>
<div style="left:934px;top:583px;width:36px;height:36px;background:#000;border-radius:10px;"></div>
<div style="left:936px;top:585px;width:28px;height:28px;background:#0a2a9b;border-radius:8px;"></div>
<span class="t" style="left:943.00px;top:592px;font:bold 13px 'Liberation Sans';color:#fff;">20</span>
<div style="left:45px;top:661px;width:36px;height:36px;background:#000;border-radius:10px;"></div>
<div style="left:47px;top:663px;width:28px;height:28px;background:#0a2a9b;border-radius:8px;"></div>
<span class="t" style="left:57.50px;top:670px;font:bold 13px 'Liberation Sans';color:#fff;">8</span>
<div style="left:181px;top:661px;width:36px;height:36px;background:#000;border-radius:10px;"></div>
<div style="left:183px;top:663px;width:28px;height:28px;background:#0a2a9b;border-radius:8px;"></div>
<span class="t" style="left:193.50px;top:670px;font:bold 13px 'Liberation Sans';color:#fff;">9</span>
<div style="left:339px;top:661px;width:36px;height:36px;background:#000;border-radius:10px;"></div>
<div style="left:341px;top:663px;width:28px;height:28px;background:#0a2a9b;border-radius:8px;"></div>
<span class="t" style="left:348.00px;top:670px;font:bold 13px 'Liberation Sans';color:#fff;">10</span>
<div style="left:444px;top:661px;width:36px;height:36px;background:#000;border-radius:10px;"></div>
<div style="left:446px;top:663px;width:28px;height:28px;background:#0a2a9b;border-radius:8px;"></div>
<span class="t" style="left:453.00px;top:670px;font:bold 13px 'Liberation Sans';color:#fff;">11</span>
<div style="left:569px;top:661px;width:36px;height:36px;background:#000;border-radius:10px;"></div>
<div style="left:571px;top:663px;width:28px;height:28px;background:#0a2a9b;border-radius:8px;"></div>
<span class="t" style="left:578.00px;top:670px;font:bold 13px 'Liberation Sans';color:#fff;">12</span>
<div style="left:726px;top:661px;width:36px;height:36px;background:#000;border-radius:10px;"></div>
<div style="left:728px;top:663px;width:28px;height:28px;background:#0a2a9b;border-radius:8px;"></div>
<span class="t" style="left:735.00px;top:670px;font:bold 13px 'Liberation Sans';color:#fff;">13</span>
<div style="left:86px;top:730px;width:36px;height:36px;background:#000;border-radius:10px;"></div>
<div style="left:88px;top:732px;width:28px;height:28px;background:#0a2a9b;border-radius:8px;"></div>
<span class="t" style="left:94.50px;top:739px;font:bold 13px 'Liberation Sans';color:#fff;">14</span>
<div style="left:228px;top:730px;width:36px;height:36px;background:#000;border-radius:10px;"></div>
<div style="left:230px;top:732px;width:28px;height:28px;background:#0a2a9b;border-radius:8px;"></div>
<span class="t" style="left:237.00px;top:739px;font:bold 13px 'Liberation Sans';color:#fff;">15</span>
<div style="left:371px;top:730px;width:36px;height:36px;background:#000;border-radius:10px;"></div>
<div style="left:373px;top:732px;width:28px;height:28px;background:#0a2a9b;border-radius:8px;"></div>
<span class="t" style="left:380.00px;top:739px;font:bold 13px 'Liberation Sans';color:#fff;">16</span>
<div style="left:514px;top:730px;width:36px;height:36px;background:#000;border-radius:10px;"></div>
<div style="left:516px;top:732px;width:28px;height:28px;background:#0a2a9b;border-radius:8px;"></div>
<span class="t" style="left:523.00px;top:739px;font:bold 13px 'Liberation Sans';color:#fff;">17</span>
<div style="left:657px;top:730px;width:36px;height:36px;background:#000;border-radius:10px;"></div>
<div style="left:659px;top:732px;width:28px;height:28px;background:#0a2a9b;border-radius:8px;"></div>
<span class="t" style="left:666.00px;top:739px;font:bold 13px 'Liberation Sans';color:#fff;">18</span>
<div style="left:800px;top:730px;width:36px;height:36px;background:#000;border-radius:10px;"></div>
<div style="left:802px;top:732px;width:28px;height:28px;background:#0a2a9b;border-radius:8px;"></div>
<span class="t" style="left:809.00px;top:739px;font:bold 13px 'Liberation Sans';color:#fff;">19</span>
<span class="t" style="left:12.01px;top:622px;font:bold 18px 'Liberation Sans';color:#0a2a9b;transform:scaleX(0.9906);-webkit-text-stroke:0.35px #0a2a9b;">Incluir</span>
<span class="t" style="left:142.00px;top:622px;font:bold 18px 'Liberation Sans';color:#0a2a9b;transform:scaleX(1.0138);-webkit-text-stroke:0.35px #0a2a9b;">Alterar</span>
<span class="t" style="left:268.60px;top:622px;font:bold 18px 'Liberation Sans';color:#0a2a9b;transform:scaleX(0.9560);-webkit-text-stroke:0.35px #0a2a9b;">Consultar</span>
<span class="t" style="left:389.55px;top:622px;font:bold 18px 'Liberation Sans';color:#0a2a9b;transform:scaleX(0.9458);-webkit-text-stroke:0.35px #0a2a9b;">Excluir</span>
<span class="t" style="left:465.80px;top:622px;font:bold 18px 'Liberation Sans';color:#0a2a9b;transform:scaleX(1.0051);-webkit-text-stroke:0.35px #0a2a9b;">Aceite DDA</span>
<span class="t" style="left:594.41px;top:622px;font:bold 18px 'Liberation Sans';color:#0a2a9b;transform:scaleX(0.9892);-webkit-text-stroke:0.35px #0a2a9b;">Pgto.Parcial</span>
<span class="t" style="left:828.61px;top:594px;font:bold 18px 'Liberation Sans';color:#0a2a9b;transform:scaleX(0.9929);-webkit-text-stroke:0.35px #0a2a9b;">Pgto.Total</span>
<span class="t" style="left:970.50px;top:590px;font:bold 18px 'Liberation Sans';color:#0a2a9b;transform:scaleX(0.9542);-webkit-text-stroke:0.35px #0a2a9b;">Outros</span>
<span class="t" style="left:18.60px;top:700px;font:bold 18px 'Liberation Sans';color:#0a2a9b;transform:scaleX(0.9562);-webkit-text-stroke:0.35px #0a2a9b;">Canc.Pgto</span>
<span class="t" style="left:140.10px;top:700px;font:bold 18px 'Liberation Sans';color:#0a2a9b;transform:scaleX(0.9904);-webkit-text-stroke:0.35px #0a2a9b;">Acerto Finan.</span>
<span class="t" style="left:316.73px;top:700px;font:bold 18px 'Liberation Sans';color:#0a2a9b;transform:scaleX(0.9731);-webkit-text-stroke:0.35px #0a2a9b;">Remessa</span>
<span class="t" style="left:424.78px;top:700px;font:bold 18px 'Liberation Sans';color:#0a2a9b;transform:scaleX(1.0221);-webkit-text-stroke:0.35px #0a2a9b;">Retorno</span>
<span class="t" style="left:522.20px;top:700px;font:bold 18px 'Liberation Sans';color:#0a2a9b;transform:scaleX(0.9829);-webkit-text-stroke:0.35px #0a2a9b;">Aceite Cód.Bar</span>
<span class="t" style="left:713.06px;top:700px;font:bold 18px 'Liberation Sans';color:#0a2a9b;transform:scaleX(1.0400);-webkit-text-stroke:0.35px #0a2a9b;">Boleto</span>
<span class="t" style="left:43.58px;top:769px;font:bold 18px 'Liberation Sans';color:#0a2a9b;transform:scaleX(1.0228);-webkit-text-stroke:0.35px #0a2a9b;">Pgto.múltiplo</span>
<span class="t" style="left:178.40px;top:769px;font:bold 18px 'Liberation Sans';color:#0a2a9b;transform:scaleX(1.0053);-webkit-text-stroke:0.35px #0a2a9b;">Comprov.pagto</span>
<span class="t" style="left:337.25px;top:769px;font:bold 18px 'Liberation Sans';color:#0a2a9b;transform:scaleX(1.0468);-webkit-text-stroke:0.35px #0a2a9b;">Inc.c/pagto</span>
<span class="t" style="left:485.30px;top:769px;font:bold 18px 'Liberation Sans';color:#0a2a9b;transform:scaleX(1.0125);-webkit-text-stroke:0.35px #0a2a9b;">Alt.Vencto</span>
<span class="t" style="left:634.90px;top:769px;font:bold 18px 'Liberation Sans';color:#0a2a9b;transform:scaleX(1.0052);-webkit-text-stroke:0.35px #0a2a9b;">Alt.Fluxo</span>
<span class="t" style="left:759.45px;top:769px;font:bold 18px 'Liberation Sans';color:#0a2a9b;transform:scaleX(1.0495);-webkit-text-stroke:0.35px #0a2a9b;">Manut.Notas</span>
</body></html>
